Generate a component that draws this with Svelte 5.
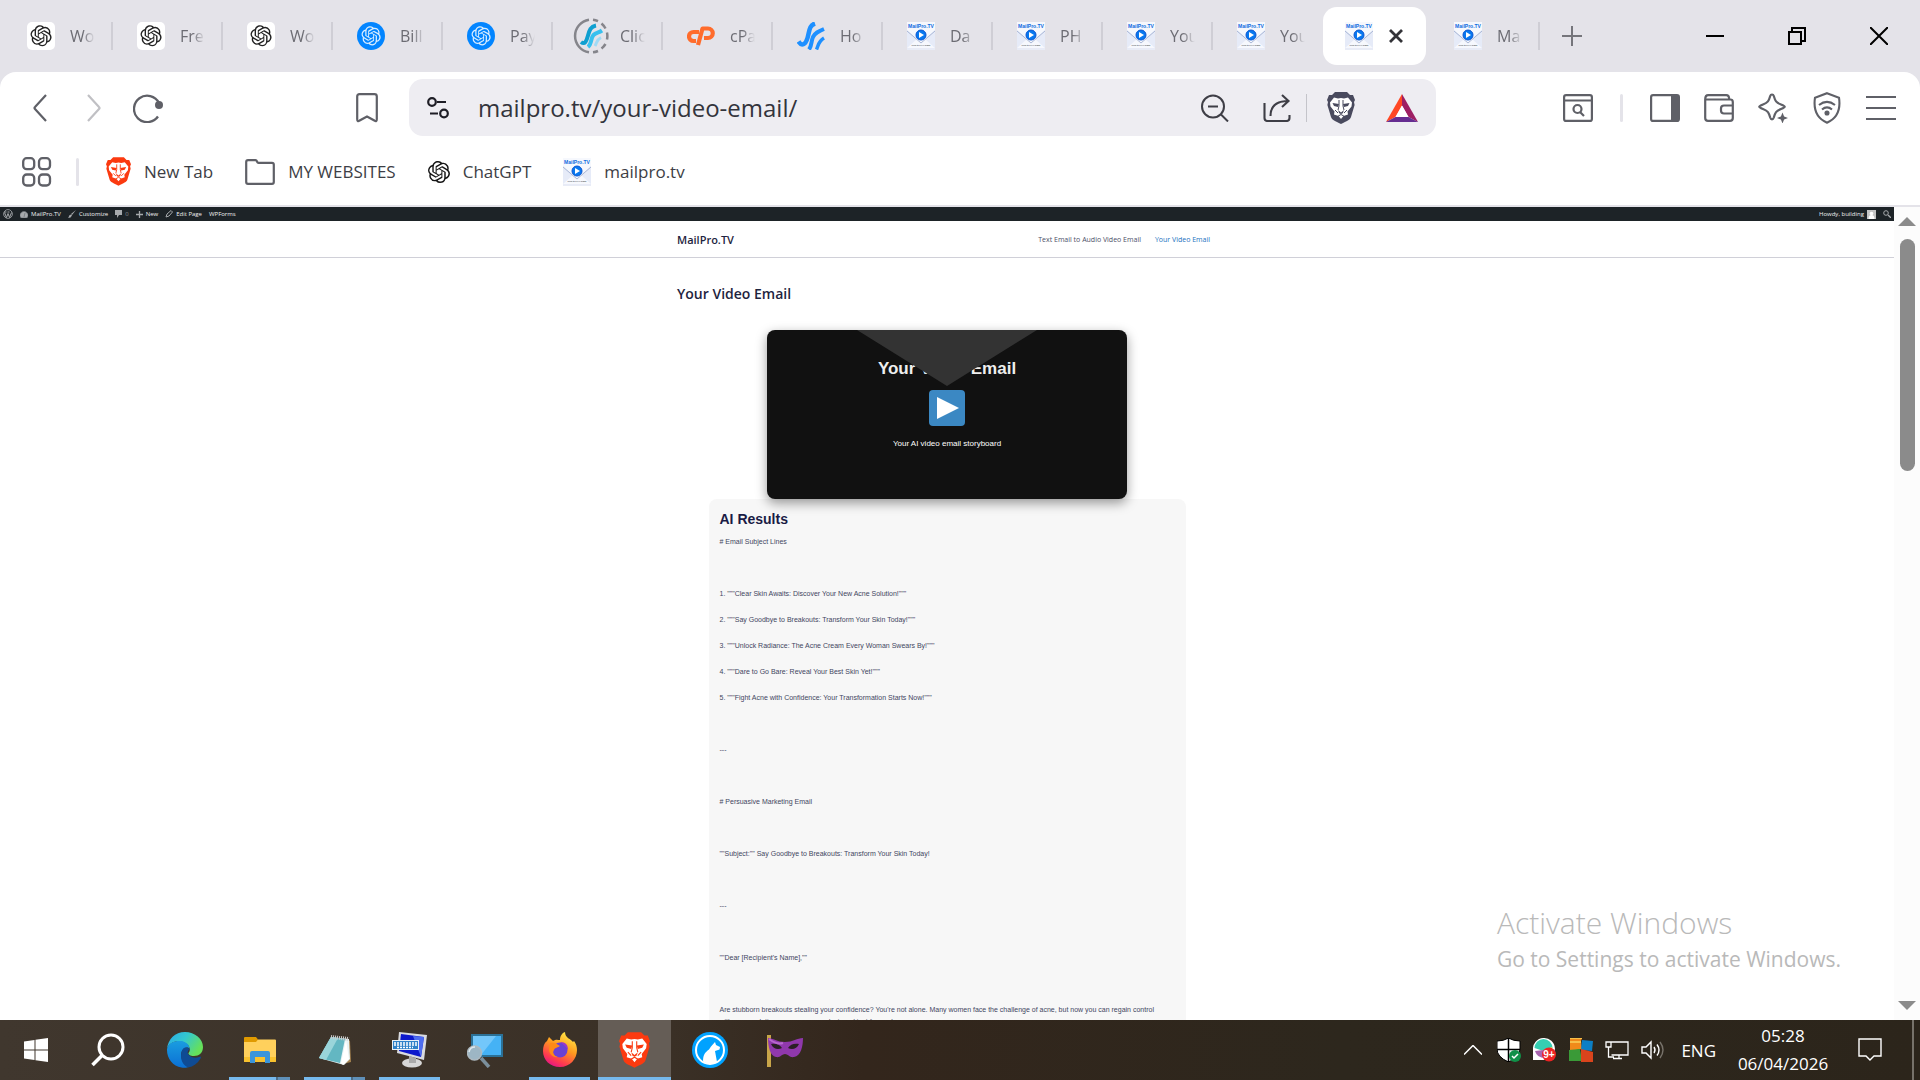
<script>
	let active = $state(12);
	let url = $state('mailpro.tv/your-video-email/');

	const tabs = [
		{ icon: 'gpt', title: 'Wo' },
		{ icon: 'gpt', title: 'Fre' },
		{ icon: 'gpt', title: 'Wo' },
		{ icon: 'gptblue', title: 'Bill' },
		{ icon: 'gptblue', title: 'Pay' },
		{ icon: 'loading', title: 'Clic' },
		{ icon: 'cpanel', title: 'cPa' },
		{ icon: 'host', title: 'Ho' },
		{ icon: 'mail', title: 'Da' },
		{ icon: 'mail', title: 'PH' },
		{ icon: 'mail', title: 'You' },
		{ icon: 'mail', title: 'You' },
		{ icon: 'mail', title: 'Your Video Email' },
		{ icon: 'mail', title: 'Ma' }
	];

	const results = [
		'# Email Subject Lines',
		'',
		'1. """Clear Skin Awaits: Discover Your New Acne Solution!"""',
		'2. """Say Goodbye to Breakouts: Transform Your Skin Today!"""',
		'3. """Unlock Radiance: The Acne Cream Every Woman Swears By!"""',
		'4. """Dare to Go Bare: Reveal Your Best Skin Yet!"""',
		'5. """Fight Acne with Confidence: Your Transformation Starts Now!"""',
		'',
		'---',
		'',
		'# Persuasive Marketing Email',
		'',
		'""Subject:"" Say Goodbye to Breakouts: Transform Your Skin Today!',
		'',
		'---',
		'',
		'""Dear [Recipient\'s Name],""',
		'',
		"Are stubborn breakouts stealing your confidence? You're not alone. Many women face the challenge of acne, but now you can regain control with our revolutionary acne cream designed just for you!"
	];

	const apps = [
		{ name: 'Edge' },
		{ name: 'File Explorer', open: true, multi: true },
		{ name: 'Notepad', open: true, multi: true },
		{ name: 'On-Screen Keyboard', open: true },
		{ name: 'Magnifier' },
		{ name: 'Firefox', open: true },
		{ name: 'Brave', open: true, current: true },
		{ name: 'LibreWolf' },
		{ name: 'Mask' }
	];
</script>

{#snippet knot()}
	<path d="M22.2819 9.8211a5.9847 5.9847 0 0 0-.5157-4.9108 6.0462 6.0462 0 0 0-6.5098-2.9A6.0651 6.0651 0 0 0 4.9807 4.1818a5.9847 5.9847 0 0 0-3.9977 2.9 6.0462 6.0462 0 0 0 .7427 7.0966 5.98 5.98 0 0 0 .511 4.9107 6.051 6.051 0 0 0 6.5146 2.9001A5.9847 5.9847 0 0 0 13.2599 24a6.0557 6.0557 0 0 0 5.7718-4.2058 5.9894 5.9894 0 0 0 3.9977-2.9001 6.0557 6.0557 0 0 0-.7475-7.0729zm-9.022 12.6081a4.4755 4.4755 0 0 1-2.8764-1.0408l.1419-.0804 4.7783-2.7582a.7948.7948 0 0 0 .3927-.6813v-6.7369l2.02 1.1686a.071.071 0 0 1 .038.052v5.5826a4.504 4.504 0 0 1-4.4945 4.4944zm-9.6607-4.1254a4.4708 4.4708 0 0 1-.5346-3.0137l.142.0852 4.783 2.7582a.7712.7712 0 0 0 .7806 0l5.8428-3.3685v2.3324a.0804.0804 0 0 1-.0332.0615L9.74 19.9502a4.4992 4.4992 0 0 1-6.1408-1.6464zM2.3408 7.8956a4.485 4.485 0 0 1 2.3655-1.9728V11.6a.7664.7664 0 0 0 .3879.6765l5.8144 3.3543-2.0201 1.1685a.0757.0757 0 0 1-.071 0l-4.8303-2.7865A4.504 4.504 0 0 1 2.3408 7.872zm16.5963 3.8558L13.1038 8.364 15.1192 7.2a.0757.0757 0 0 1 .071 0l4.8303 2.7913a4.4944 4.4944 0 0 1-.6765 8.1042v-5.6772a.79.79 0 0 0-.407-.667zm2.0107-3.0231l-.142-.0852-4.7735-2.7818a.7759.7759 0 0 0-.7854 0L9.409 9.2297V6.8974a.0662.0662 0 0 1 .0284-.0615l4.8303-2.7866a4.4992 4.4992 0 0 1 6.6802 4.66zM8.3065 12.863l-2.02-1.1638a.0804.0804 0 0 1-.038-.0567V6.0742a4.4992 4.4992 0 0 1 7.3757-3.4537l-.142.0805L8.704 5.459a.7948.7948 0 0 0-.3927.6813zm1.0976-2.3654l2.602-1.4998 2.6069 1.4998v2.9994l-2.5974 1.4997-2.6067-1.4997Z" />
{/snippet}

{#snippet mailIcon()}
	<svg width="28" height="28" viewBox="0 0 28 28">
		<rect width="28" height="28" fill="#f6f8fd" />
		<path d="M0 8l10 9L0 26zM28 8l-10 9 10 9z" fill="#e6ebf8" />
		<path d="M0 9l14 12L28 9" fill="none" stroke="#a9b6d6" />
		<text x="14" y="6" class="mail-name">MailPro.TV</text>
		<circle cx="14" cy="13" r="5" fill="#0878f0" stroke="#0a55d0" />
		<path d="M12 10l5 3-5 3z" fill="#fff" />
		<text x="14" y="24" class="mail-sub">Click to PLAY Email</text>
		<path d="M0 27h28" stroke="#dadff0" />
	</svg>
{/snippet}

{#snippet lion(color, width, height)}
	<svg {width} {height} viewBox="0 0 28 32">
		<path d="M8 0h12l3 3 3 0 2 5-1 2 .6 3-3.6 12c-1 3-4 4-10 7-6-3-9-4-10-7L.4 13 1 10 0 8l2-5 3 0z" fill={color} />
		<path d="M7 5.500l4 1 3-.5 3 .5 4-1 4 5-.5 4-4 5 .5 3-4.500 1.500L14 27l-2.500-3L7 22.500l.5-3-4-5-.5-4z" fill="#fff" />
		<path d="M5.500 11l6.500 1-1 3-4-1zM22.500 11L16 12l1 3 4-1zM11 18l3 2.500 3-2.500-1.200 3.200-1.800.8-1.800-.8z" fill={color} />
		<path d="M12 8v6l-1 4M16 8v6l1 4M8 18l3 3M20 18l-3 3M10.500 24.500L14 22.500l3.500 2" fill="none" stroke={color} stroke-width="1" />
	</svg>
{/snippet}

{#snippet favicon(name)}
	{#if name == 'gpt'}
		<svg width="28" height="28" viewBox="0 0 28 28">
			<rect width="28" height="28" rx="5" fill="#fff" />
			<g transform="translate(3.500 3.200) scale(.88)" fill="#222">{@render knot()}</g>
		</svg>
	{:else if name == 'gptblue'}
		<svg width="28" height="28" viewBox="0 0 28 28">
			<circle cx="14" cy="14" r="14" fill="#0285ff" />
			<g transform="translate(4.500 4.200) scale(.8)" fill="#d9edff">{@render knot()}</g>
		</svg>
	{:else if name == 'loading'}
		<svg width="36" height="36" viewBox="0 0 36 36" fill="none">
			<path d="M16 1.700a16.500 16.500 0 0 0 0 32.600" stroke="#85858b" stroke-width="2.500" />
			<path d="M20 1.700a16.500 16.500 0 0 1 5 1.500M28.500 5.500a16.500 16.500 0 0 1 4 5M34 14.500a16.500 16.500 0 0 1 0 7M32.500 26a16.500 16.500 0 0 1-4 4.500M25 33a16.500 16.500 0 0 1-5 1.300" stroke="#85858b" stroke-width="2.500" />
			<path d="M8 24c4 3 5.500-1 7-6.500C16.500 12 17.500 8.500 23 7.500" stroke="#0f9fd0" stroke-width="4" />
			<path d="M15 29c4-3 2.500-9 5.500-12 2.500-2.500 5-2 8.500-4.500" stroke="#38c0ee" stroke-width="4" />
			<path d="M22 28c2-3 1-6 6-8.500" stroke="#a0daf5" stroke-width="3" />
		</svg>
	{:else if name == 'cpanel'}
		<svg width="28" height="28" viewBox="0 0 28 28">
			<path d="M12 10H6.500a4.500 4.500 0 0 0 0 9H9M11 23l4.500-16.500H21a4.500 4.500 0 0 1 0 9.500h-4" fill="none" stroke="#ff6c2c" stroke-width="4.200" stroke-linejoin="round" />
		</svg>
	{:else if name == 'host'}
		<svg width="28" height="28" viewBox="0 0 28 28" fill="none" stroke="#1e90ff">
			<path d="M1.500 19.500c3 5 7 3.500 9-3.500C12.500 9 12 3.500 18 1.500" stroke-width="4.500" />
			<path d="M12 27.500c3-4 2-8 4-12.500 2-4 5-5.500 11-8" stroke-width="4" />
			<path d="M19.500 27.500c2-4 1.500-8 7.500-11.500" stroke-width="3.500" />
		</svg>
	{:else}
		{@render mailIcon()}
	{/if}
{/snippet}

<div class="desktop">
	<header class="browser">
		<div class="tabstrip">
			<div class="tabs" role="tablist">
				{#each tabs as tab, i}
					{#if i == active}
						<div class="tab current" role="tab" tabindex="0" aria-selected="true" aria-label={tab.title}>
							{@render favicon(tab.icon)}
							<button class="close" aria-label="Close tab">
								<svg width="14" height="14" viewBox="0 0 14 14"><path d="M1 1l12 12M13 1L1 13" stroke="#333338" stroke-width="2.800" /></svg>
							</button>
						</div>
					{:else}
						<button class="tab" class:nosep={i == active - 1} role="tab" aria-selected="false" onclick={() => (active = i)}>
							<span class="fav">{@render favicon(tab.icon)}</span>
							<span class="title">{tab.title}</span>
						</button>
					{/if}
				{/each}
			</div>
			<button class="newtab" aria-label="New tab">
				<svg width="20" height="20" viewBox="0 0 20 20"><path d="M10 0v20M0 10h20" stroke="#75757b" stroke-width="2" /></svg>
			</button>
			<div class="window-controls">
				<button aria-label="Minimize"><svg width="18" height="18"><path d="M0 9h18" stroke="#000" stroke-width="2" /></svg></button>
				<button aria-label="Restore"><svg width="18" height="18" fill="none" stroke="#000" stroke-width="2"><path d="M1 5h12v12H1zM4 4V1h13v13h-3" /></svg></button>
				<button aria-label="Close"><svg width="18" height="18"><path d="M0 0l18 18M18 0L0 18" stroke="#000" stroke-width="2" /></svg></button>
			</div>
		</div>

		<div class="chrome">
			<div class="toolbar">
				<div class="nav-buttons">
					<button aria-label="Back"><svg width="14" height="28" viewBox="0 0 14 28"><path d="M13 1L2 13q-1 1 0 2l11 12" fill="none" stroke="#5f6067" stroke-width="2.200" /></svg></button>
					<button aria-label="Forward"><svg width="14" height="28" viewBox="0 0 14 28"><path d="M1 1l11 12q1 1 0 2L1 27" fill="none" stroke="#c0c0c4" stroke-width="2.200" /></svg></button>
					<button aria-label="Reload"><svg width="30" height="30" viewBox="0 0 30 30"><path d="M26 10A13.200 13.200 0 1 0 25 23.500" fill="none" stroke="#5f6067" stroke-width="2.300" /><circle cx="26" cy="12" r="4" fill="#5f6067" /></svg></button>
				</div>
				<button class="bookmark" aria-label="Bookmark this page"><svg width="22" height="30" viewBox="0 0 22 30"><path d="M1.200 26V3.500Q1.200 1.200 3.500 1.200h15q2.300 0 2.300 2.300V26q0 3.500-2.500 1.500L11 23.500l-7.300 4q-2.500 2-2.500-1.500z" fill="none" stroke="#5f6067" stroke-width="2.200" /></svg></button>

				<div class="omnibox">
					<button aria-label="Site settings"><svg width="22" height="22" viewBox="0 0 22 22" fill="none" stroke="#1e1e26" stroke-width="2.200"><circle cx="5" cy="5" r="3.800" /><path d="M10 5h9M3 16.500h8" /><circle cx="17" cy="16.500" r="3.800" /></svg></button>
					<input type="text" aria-label="Address" bind:value={url} />
					<button aria-label="Zoom"><svg width="28" height="28" viewBox="0 0 28 28" fill="none" stroke="#3e3e46" stroke-width="2"><circle cx="12" cy="12.500" r="11" /><path d="M7 12.500h10M20 20.500l7 7" /></svg></button>
					<button class="share" aria-label="Share"><svg width="28" height="28" viewBox="0 0 28 28" fill="none" stroke="#3e3e46" stroke-width="2.100"><path d="M1.500 9v15q0 3 3 3h19q3 0 3-3v-3M7.500 22c0-9 5-15 18-15M19 1l6.500 6-6.500 6" /></svg></button>
					<span class="bar"></span>
					<button class="shields" aria-label="Brave Shields">{@render lion('#494a5e', 28, 34)}</button>
					<button aria-label="Rewards">
						<svg width="32" height="28" viewBox="0 0 32 28">
							<path d="M16 0L0 28l9.500-5L16 11.500z" fill="#ff4724" /><path d="M16 0l16 28-9.500-5L16 11.500z" fill="#9e1f63" /><path d="M0 28h32l-9.500-5h-13z" fill="#662d91" /><path d="M16 11.500L22.500 23h-13z" fill="#fff" />
						</svg>
					</button>
				</div>

				<div class="actions">
					<button aria-label="Search tabs"><svg width="30" height="28" viewBox="0 0 30 28" fill="none" stroke="#5f6067" stroke-width="2.200"><rect x="1.100" y="1.100" width="27.800" height="25.800" rx="2" /><path d="M1 6.500h28M17 18l4 4" /><circle cx="14.500" cy="15" r="4" /></svg></button>
					<span class="split"></span>
					<button aria-label="Sidebar"><svg width="30" height="28" viewBox="0 0 30 28"><rect x="1.100" y="1.100" width="27.800" height="25.800" rx="2" fill="none" stroke="#5f6067" stroke-width="2.200" /><path d="M21 1h8v26h-8z" fill="#5f6067" /></svg></button>
					<button aria-label="Wallet"><svg width="30" height="28" viewBox="0 0 30 28" fill="none" stroke="#5f6067" stroke-width="2.200"><path d="M1.200 6V24q0 2.800 2.800 2.800h22q2.800 0 2.800-2.800V8q0-2.500-2.500-2.500H1.200q0-4.300 3-4.300h18q3 0 3 4.300M28.800 11.500H20q-3 0-3 3v2q0 3 3 3h8.800" /></svg></button>
					<button aria-label="Leo AI"><svg width="30" height="30" viewBox="0 0 30 30"><path d="M14 1.500c1 0 1.500.5 1.800 1.500 1.400 5 2.200 6.500 7.200 8.500 5 2 5 2.500 0 4.500-5 2-5.800 3.500-7.200 8.500-.8 2.500-2.800 2.500-3.600 0C10.800 19.500 10 18 5 16c-5-2-5-2.500 0-4.500 5-2 5.800-3.500 7.200-8.500.3-1 .8-1.500 1.800-1.500z" fill="none" stroke="#5f6067" stroke-width="2.200" /><path d="M24.500 19.500l1.600 4 3.900 1.500-3.900 1.500-1.600 4-1.600-4L19 25l3.900-1.500z" fill="#5f6067" /></svg></button>
					<button aria-label="VPN"><svg width="30" height="32" viewBox="-1 0 30 32" fill="none" stroke="#5f6067" stroke-width="2.100"><path d="M14 1.200l12 4.500c1.500 10-.5 20-12 25C2.500 25.700.5 15.700 2 5.700z" /><path d="M6 13c5-4 11-4 16 0M9 17.500c3-2.500 7-2.500 10 0" /><circle cx="14" cy="21" r="1.500" fill="#5f6067" /></svg></button>
					<button aria-label="Menu"><svg width="30" height="26" viewBox="0 0 30 26"><path d="M0 2h30M0 13h30M0 24h30" stroke="#5f6067" stroke-width="2.200" /></svg></button>
				</div>
			</div>

			<nav class="bookmarks">
				<button aria-label="All bookmarks"><svg width="30" height="30" viewBox="0 0 30 30" fill="none" stroke="#5f6067" stroke-width="2.300"><rect x="1.200" y="1.200" width="11" height="11" rx="3.500" /><rect x="17" y="1.200" width="11" height="11" rx="3.500" /><rect x="1.200" y="17.500" width="11" height="11" rx="3.500" /><rect x="17" y="17.500" width="11" height="11" rx="3.500" /></svg></button>
				<span class="split"></span>
				<a href="#newtab">{@render lion('#fb3a10', 25, 29)}New Tab</a>
				<a href="#websites"><svg width="30" height="26" viewBox="0 0 30 26"><path d="M1.200 3q0-1.800 1.800-1.800h7.500q1 0 1.500 1.300t1.500 1.300H27q1.800 0 1.800 1.800V23q0 1.800-1.800 1.800H3Q1.200 24.800 1.200 23z" fill="none" stroke="#5f6067" stroke-width="2.200" /></svg>MY WEBSITES</a>
				<a href="#chatgpt"><svg width="22" height="22" viewBox="0 0 24 24" fill="#151515">{@render knot()}</svg>ChatGPT</a>
				<a href="#mailpro">{@render mailIcon()}mailpro.tv</a>
			</nav>
		</div>
	</header>

	<div class="viewport">
		<main class="page">
			<div class="adminbar">
				<a href="#wp" aria-label="WordPress"><svg width="10" height="10" viewBox="0 0 10 10"><circle cx="5" cy="5" r="4.400" fill="none" stroke="#a7aaad" stroke-width=".8" /><path d="M1.500 3.500l2 5L5 4.500l1.500 4 2-5M1.500 3h2M4.500 3h2" fill="none" stroke="#a7aaad" /></svg></a>
				<a href="#site"><svg width="8" height="7" viewBox="0 0 8 7"><path d="M1 7a4 4 0 1 1 6 0zM4 6l1-4" fill="#a7aaad" stroke="#555a60" stroke-width=".5" /></svg>MailPro.TV</a>
				<a href="#customize"><svg width="8" height="8" viewBox="0 0 8 8"><path d="M8 0L3 4l1 1zM3 4.500L4 5.500Q3 8 0 8q1-1 1-2t2-1.500z" fill="#a7aaad" /></svg>Customize</a>
				<a href="#comments" class="dim"><svg width="7" height="8" viewBox="0 0 7 8"><path d="M0 0h7v5H4L2 8V5H0z" fill="#a7aaad" /></svg>0</a>
				<a href="#new"><svg width="7" height="7" viewBox="0 0 7 7"><path d="M3.500 0v7M0 3.500h7" stroke="#a7aaad" stroke-width="1.300" /></svg>New</a>
				<a href="#edit"><svg width="8" height="8" viewBox="0 0 8 8"><path d="M1 7l1-3 4-3.500L7.500 2 4 6z" fill="none" stroke="#a7aaad" /></svg>Edit Page</a>
				<a href="#wpforms">WPForms</a>
				<a href="#profile" class="howdy">Howdy, building<svg width="9" height="9" viewBox="0 0 9 9"><path d="M0 0h9v9H0z" fill="#c4c4c4" /><circle cx="4.500" cy="3.500" r="1.800" fill="#fff" /><path d="M1.500 9q0-4 3-4t3 4z" fill="#fff" /></svg></a>
				<a href="#search" aria-label="Search"><svg width="8" height="8" viewBox="0 0 8 8"><circle cx="3" cy="3" r="2.300" fill="none" stroke="#a7aaad" /><path d="M5 5l3 3" stroke="#a7aaad" stroke-width="1.300" /></svg></a>
			</div>

			<div class="site-header">
				<div class="container">
					<a href="#home" class="brand">MailPro.TV</a>
					<nav>
						<a href="#text-email">Text Email to Audio Video Email</a>
						<a href="#your-video" class="here">Your Video Email</a>
					</nav>
				</div>
			</div>

			<div class="container column">
				<h1>Your Video Email</h1>
			</div>

			<section class="video">
				<h2>Your Video Email</h2>
				<button aria-label="Play">
					<svg width="36" height="36" viewBox="0 0 36 36"><rect width="36" height="36" rx="4" fill="#3b88c3" /><path d="M8 7l22 11L8 29z" fill="#fff" /></svg>
				</button>
				<p>Your AI video email storyboard</p>
				<div class="flap"></div>
			</section>

			<section class="results">
				<h3>AI Results</h3>
				{#each results as line}
					<p>{line}</p>
				{/each}
			</section>
		</main>
		<div class="scrollbar">
			<svg width="18" height="9"><path d="M9 0l9 9H0z" fill="#8b8b8b" /></svg>
			<div class="track"><div class="thumb"></div></div>
			<svg width="18" height="9"><path d="M0 0h18L9 9z" fill="#8b8b8b" /></svg>
		</div>
		<div class="watermark">
			<strong>Activate Windows</strong>
			<span>Go to Settings to activate Windows.</span>
		</div>
	</div>

	<footer class="taskbar">
		<button class="start" aria-label="Start"><svg width="24" height="24" viewBox="0 0 24 24"><path d="M0 3.500L10.500 2v9.500H0zM11.500 1.800L24 0v11.500H11.500zM0 12.500h10.500V22L0 20.500zM11.500 12.500H24V24l-12.500-1.800z" fill="#fff" /></svg></button>
		<button class="find" aria-label="Search"><svg width="34" height="34" viewBox="0 0 34 34" fill="none" stroke="#fff" stroke-width="3"><circle cx="20" cy="14" r="12" /><path d="M11 22.500L1.500 32" stroke-width="3.500" /></svg></button>
		{#each apps as app}
			<button class="app" class:open={app.open} class:multi={app.multi} class:active={app.current} aria-label={app.name}>
				{#if app.name == 'Edge'}
					<svg width="36" height="36" viewBox="0 0 36 36">
						<defs>
							<linearGradient id="edgeA" x1="0" x2="1" y1="0" y2=".5"><stop offset="0" stop-color="#2aa8e8" /><stop offset=".5" stop-color="#33c8d0" /><stop offset="1" stop-color="#66e05a" /></linearGradient>
							<linearGradient id="edgeB" x1="0" x2="0" y1="0" y2="1"><stop offset="0" stop-color="#1a9de0" /><stop offset="1" stop-color="#0b6fd4" /></linearGradient>
						</defs>
						<path d="M0 17C1 7 8 0 18 0s18 7 18 15c0 6-4 9-9 9-4 0-6-1.500-5.500-3 3-3 1-9-5.500-11C10 8 2 10 0 17z" fill="url(#edgeA)" />
						<path d="M0 17C2 10 8 8.500 14 9c5 .5 9 4 8.500 8 0-2-6-3-8 3-2 7 3 12 7 15-3 1-5 1-7 .6C6 34 0 27 0 18z" fill="url(#edgeB)" />
						<path d="M14.500 20c1-4 4-6 8-3-2 2-2.500 4-1 5.500 3 3.500 8 4 12 2 .5.500.5 1.500 0 2-3 5-7 8-12.500 9-6-3-8-9-6.500-15.500z" fill="#0f4b94" />
					</svg>
				{:else if app.name == 'File Explorer'}
					<svg width="32" height="26" viewBox="0 0 32 26">
						<path d="M0 1q0-1 1-1h11l2 2.500V5H0z" fill="#e09a00" /><path d="M0 5h12l2-2.500h17q1 0 1 1V24q0 1-1 1H1q-1 0-1-1z" fill="#ffd05c" /><path d="M0 20h32v4q0 1-1 1H1q-1 0-1-1z" fill="#f9c22e" />
						<path d="M6 26V16q0-2 2-2h16q2 0 2 2v10h-5v-6H11v6z" fill="#3a95dc" />
					</svg>
				{:else if app.name == 'Notepad'}
					<svg width="32" height="32" viewBox="0 0 32 32">
						<path d="M26 4l5 3 1 21-8 2z" fill="#a58350" /><path d="M12 3l18 2 1 20-6 6L0 24z" fill="#e8f3f5" /><path d="M12 3l14 2-5 24L0 24z" fill="#63b7c2" /><path d="M12 3l7 1L7 26l-7-2z" fill="#9ad5da" /><path d="M22 29l5-23 3 19-6 6z" fill="#fff" /><path d="M12 3l18 2" stroke="#ccc" stroke-width="4" stroke-dasharray="1 1" />
					</svg>
				{:else if app.name == 'On-Screen Keyboard'}
					<svg width="36" height="36" viewBox="0 0 36 36">
						<ellipse cx="20" cy="31" rx="10" ry="4.500" fill="#d7d7d7" /><path d="M17 24l7 2v5h-7z" fill="#aaa" /><path d="M7 0l28 3-3 25L5 21z" fill="#d9dbe0" /><path d="M9 2l23 3-3 20L7 19z" fill="#0d18cc" /><path d="M21 4l11 1-3 20z" fill="#4d6df0" />
						<rect y="8" width="27" height="10" fill="#e8f1f8" /><rect x="1" y="9" width="25" height="8" fill="#2f82c9" /><path d="M2 11h23M2 13h23M5 15.500h16" stroke="#fff" stroke-width="1.300" stroke-dasharray="2 1" />
					</svg>
				{:else if app.name == 'Magnifier'}
					<svg width="36" height="36" viewBox="0 0 36 36">
						<path d="M4 2h32v23H4z" fill="#2b7197" /><path d="M6 4h28v19H6z" fill="#45b2f5" /><path d="M6 4h23L14 23H6z" fill="#73c7fa" /><path d="M14 26l8 9" stroke="#7b8f9c" stroke-width="3.500" /><circle cx="7.500" cy="21" r="7" fill="#9db6c4" stroke="#adb9c0" stroke-width="1.500" /><path d="M2 20q1-5 6-5" stroke="#e0e8ec" fill="none" stroke-width="1.500" />
					</svg>
				{:else if app.name == 'Firefox'}
					<svg width="34" height="36" viewBox="0 0 34 36">
						<defs><linearGradient id="fox" x1=".8" x2=".3" y1="0" y2="1"><stop offset="0" stop-color="#fff04a" /><stop offset=".45" stop-color="#ff9a1f" /><stop offset=".8" stop-color="#ff3b4e" /><stop offset="1" stop-color="#e31587" /></linearGradient></defs>
						<path d="M4 9l2-4 4 4c3-2 5-1 7-1 0-4 2-7 5-8 0 6 6 7 8 10l1-1c3 4 3 8 3 9 0 9-7 17-17 17S0 28 0 19c0-4 1-8 4-10z" fill="url(#fox)" />
						<circle cx="17" cy="18" r="7.500" fill="#6b41d4" /><path d="M7 11c4-1 6 0 10 3-2 2-5 1-6 4-2 3 0 6 4 7-5 1-9-3-9-8z" fill="#ff8a16" /><path d="M17 10c6 0 8 3 8 8l-3-4z" fill="#9b38c8" />
					</svg>
				{:else if app.name == 'Brave'}
					{@render lion('#fb3a10', 31, 36)}
				{:else if app.name == 'LibreWolf'}
					<svg width="36" height="36" viewBox="0 0 36 36">
						<circle cx="18" cy="18" r="18" fill="#00a2ff" /><circle cx="18" cy="18" r="14" fill="none" stroke="#fff" stroke-width="2" /><path d="M11 29.500c0-7 2-9 6-12l2-3 4-4.500 1 3 4 2-.5 2.500-4.500 1.500 2 11c-5 3-10 2-14-.5z" fill="#fff" />
					</svg>
				{:else}
					<svg width="36" height="34" viewBox="0 0 36 34">
						<path d="M0 2h4v32H0z" fill="#c8a549" /><path d="M1 5c5 0 9 4 17 4s12-4 18-4c0 8-2 18-9 19-4 1-6-3-9-3s-5 4-9 3C3 23 1 13 1 5z" fill="#9038ac" /><path d="M4 11c4-1 9 0 11 4-4 2-9 1-11-4zM32 11c-4-1-9 0-11 4 4 2 9 1 11-4z" fill="#2a1f25" /><path d="M2 6q8 6 14 4" stroke="#b768cf" fill="none" stroke-width="2" />
					</svg>
				{/if}
			</button>
		{/each}

		<div class="tray">
			<button aria-label="Show hidden icons"><svg width="18" height="10"><path d="M0 9.500l9-9 9 9" fill="none" stroke="#fff" stroke-width="1.500" /></svg></button>
			<button aria-label="Security"><svg width="24" height="24" viewBox="0 0 24 24"><path d="M11.500 0Q16 3 23 3v8q0 8-11.500 13Q0 19 0 11V3q7 0 11.500-3z" fill="#fff" stroke="#000" /><path d="M11.500 0v24M0 11.500h23" stroke="#000" stroke-width="1.500" /><circle cx="18" cy="18" r="6" fill="#109048" /><path d="M15 18l2 2 4-4" stroke="#fff" fill="none" stroke-width="1.500" /></svg></button>
			<button aria-label="Chat"><svg width="24" height="24" viewBox="0 0 24 24"><path d="M0 22V12a11 11 0 1 1 11 10z" fill="#fff" /><path d="M1.500 10a9 9 0 0 1 18 0l-9 3z" fill="#35cfb2" /><path d="M2 13l8-1 2 8q-8 0-10-7z" fill="#a864ae" /><path d="M11 12l8-3 1 5z" fill="#f5d24c" /><circle cx="16" cy="16.500" r="7" fill="#ee2424" /><text x="16" y="20" class="count">9+</text></svg></button>
			<button aria-label="Antivirus"><svg width="24" height="24" viewBox="0 0 24 24"><path d="M1 0h12l-1 3 1 8-12 2z" fill="#f08a1a" /><path d="M13 2l11 1-1 10-11-1z" fill="#0c7fc4" /><path d="M0 12l11-1 2 12H0z" fill="#3a9a37" /><path d="M12 11l12 3v10H12z" fill="#d9441c" /><path d="M1 0h12M1 4h11" stroke="#f7c04a" stroke-width="2" /></svg></button>
			<button aria-label="Network"><svg width="24" height="20" viewBox="0 0 24 20" fill="none" stroke="#fff" stroke-width="1.300"><path d="M6.500 2H23v13H6.500M14 15v3M8 18.500h9M1 2h5v5H1zM3.500 7v10H9" /></svg></button>
			<button aria-label="Volume"><svg width="24" height="20" viewBox="0 0 24 20" fill="none" stroke="#fff" stroke-width="1.400"><path d="M1 7h4l5-5v16l-5-5H1zM13 7q2 3 0 6M16 4.500q4 5.500 0 11" /><path d="M19 2q6 8 0 16" stroke="#77726a" /></svg></button>
			<button class="lang">ENG</button>
			<button class="clock"><span>05:28</span><span>06/04/2026</span></button>
			<button class="notify" aria-label="Notifications"><svg width="24" height="24" viewBox="0 0 24 24"><path d="M1 1h22v17h-7l-4 4-4-4H1z" fill="none" stroke="#fff" stroke-width="1.400" /></svg></button>
			<span class="show-desktop"></span>
		</div>
	</footer>
</div>

<style>
	:global(body) {
		margin: 0;
		overflow: hidden;
	}
	.desktop {
		height: 100vh;
		display: flex;
		flex-direction: column;
		font-family: "Open Sans", "Noto Sans", sans-serif;
		background: #fff;
	}
	button {
		border: 0;
		padding: 0;
		background: none;
		font: inherit;
		color: inherit;
		display: flex;
		align-items: center;
		justify-content: center;
	}
	a {
		color: inherit;
		text-decoration: none;
	}
	h1, h2, h3, p {
		margin: 0;
	}
	svg {
		display: block;
		flex-shrink: 0;
	}
	.browser {
		background: #e4e3e9;
	}
	.tabstrip {
		height: 72px;
		display: flex;
		align-items: center;
	}
	.tabs {
		display: flex;
		align-items: center;
		padding-left: 3px;
	}
	.tab {
		box-sizing: border-box;
		width: 110px;
		height: 28px;
		padding-left: 24px;
		justify-content: flex-start;
		gap: 15px;
		border-right: 2px solid #cfced5;
		font-size: 16px;
		color: #6c6c73;
	}
	.tab.nosep {
		border-color: transparent;
	}
	.tab.current {
		display: flex;
		align-items: center;
		width: 103px;
		height: 58px;
		margin-right: 4px;
		padding-left: 22px;
		gap: 16px;
		border: 0;
		border-radius: 14px;
		background: #fff;
	}
	.fav {
		width: 28px;
		display: flex;
		justify-content: center;
	}
	.title {
		width: 25px;
		overflow: hidden;
		white-space: nowrap;
		text-align: left;
		mask-image: linear-gradient(to right, #000 50%, transparent);
	}
	.mail-name, .mail-sub, .count {
		font-family: "Liberation Sans", sans-serif;
		font-weight: bold;
		font-size: 5px;
		text-anchor: middle;
		fill: #0b6ae0;
	}
	.mail-sub {
		font-size: 2px;
		fill: #55585f;
	}
	.count {
		font-size: 10px;
		fill: #fff;
	}
	.newtab {
		width: 64px;
		height: 40px;
	}
	.window-controls {
		margin-left: auto;
		display: flex;
	}
	.window-controls button {
		width: 82px;
		height: 72px;
	}
	.chrome {
		background: #fff;
		border-radius: 16px 16px 0 0;
		border-bottom: 2px solid #e4e3e9;
		padding-bottom: 5px;
	}
	.toolbar {
		height: 71px;
		display: flex;
		align-items: center;
		padding: 0 24px 0 33px;
	}
	.nav-buttons {
		display: flex;
		align-items: center;
		gap: 40px;
	}
	.nav-buttons button:last-child {
		margin-left: -8px;
	}
	.bookmark {
		margin: 0 31px 0 auto;
	}
	.omnibox {
		box-sizing: border-box;
		width: 1027px;
		height: 57px;
		display: flex;
		align-items: center;
		padding: 0 18px;
		border-radius: 14px;
		background: #eeedf2;
	}
	.omnibox input {
		flex: 1;
		min-width: 0;
		margin-left: 29px;
		padding: 0;
		border: 0;
		outline: 0;
		background: none;
		font: inherit;
		font-size: 24px;
		color: #33343c;
	}
	.share {
		margin: 0 15px 0 34px;
	}
	.bar {
		width: 1px;
		height: 28px;
		background: #c4c4ca;
	}
	.shields {
		margin: 0 31px 0 20px;
	}
	.actions {
		display: flex;
		align-items: center;
		gap: 24px;
		margin-left: 127px;
	}
	.split {
		width: 3px;
		height: 28px;
		border-radius: 2px;
		background: #e4e3e9;
	}
	.actions .split {
		margin: 0 3px;
	}
	.bookmarks {
		height: 57px;
		display: flex;
		align-items: center;
		padding-left: 22px;
		font-size: 17px;
		color: #3d3e45;
	}
	.bookmarks .split {
		margin: 0 27px 0 24px;
	}
	.bookmarks a {
		display: flex;
		align-items: center;
		gap: 13px;
		margin-right: 32px;
	}
	.viewport {
		flex: 1;
		min-height: 0;
		display: flex;
		position: relative;
	}
	.page {
		flex: 1;
		overflow: hidden;
	}
	.adminbar {
		box-sizing: border-box;
		height: 14px;
		display: flex;
		align-items: center;
		gap: 7px;
		padding: 0 3px;
		background: #1d2327;
		color: #f0f0f1;
		font-size: 6px;
	}
	.adminbar a {
		display: flex;
		align-items: center;
		gap: 3px;
	}
	.adminbar .dim {
		color: #8c9094;
	}
	.adminbar .howdy {
		margin-left: auto;
	}
	.site-header {
		border-bottom: 1px solid #d0d0d8;
	}
	.container {
		box-sizing: border-box;
		max-width: 540px;
		margin: 0 auto;
	}
	.site-header .container {
		height: 36px;
		display: flex;
		align-items: center;
		justify-content: space-between;
		padding-right: 7px;
	}
	.brand {
		font-size: 11px;
		font-weight: 600;
		color: #1e2440;
	}
	.site-header nav {
		display: flex;
		gap: 14px;
		font-size: 7px;
		color: #4b4f68;
	}
	.site-header .here {
		color: #1b72c0;
	}
	.column {
		padding: 27px 0;
	}
	h1 {
		font-size: 14px;
		line-height: 18px;
		font-weight: 600;
		color: #1e2440;
	}
	.video {
		position: relative;
		box-sizing: border-box;
		width: 360px;
		height: 169px;
		margin: 0 auto;
		padding-top: 29px;
		display: flex;
		flex-direction: column;
		align-items: center;
		border-radius: 8px;
		background: #111;
		box-shadow: 0 4px 12px rgba(0, 0, 0, 0.4);
		font-family: "Liberation Sans", sans-serif;
		color: #eee;
	}
	.video h2 {
		font-size: 17px;
		line-height: 20px;
		margin-bottom: 11px;
	}
	.video p {
		margin-top: 13px;
		font-size: 8px;
		line-height: 10px;
		color: #fff;
	}
	.flap {
		position: absolute;
		top: 0;
		left: 90px;
		width: 180px;
		height: 56px;
		background: #333;
		clip-path: polygon(0 0, 100% 0, 50% 100%);
	}
	.results {
		box-sizing: border-box;
		max-width: 477px;
		margin: 0 auto;
		padding: 11px 20px 11px 11px;
		border-radius: 8px;
		background: #f7f7f7;
		font-family: "Liberation Sans", sans-serif;
		color: #42465f;
	}
	.results h3 {
		margin-bottom: 8px;
		font-size: 14px;
		line-height: 18px;
		color: #1a1b45;
	}
	.results p {
		min-height: 12px;
		margin-bottom: 14px;
		font-size: 7px;
		line-height: 12px;
	}
	.scrollbar {
		width: 26px;
		display: flex;
		flex-direction: column;
		align-items: center;
		box-sizing: border-box;
		padding: 10px 0;
		background: #fcfcfc;
	}
	.track {
		flex: 1;
		width: 15px;
		padding: 13px 0;
	}
	.thumb {
		height: 31%;
		border-radius: 8px;
		background: #8b8b8b;
	}
	.watermark {
		position: absolute;
		right: 79px;
		bottom: 46px;
		display: flex;
		flex-direction: column;
		color: #b9b9b9;
		font-size: 21px;
		line-height: 30px;
	}
	.watermark strong {
		font-size: 30px;
		line-height: 42px;
		font-weight: 300;
	}
	.taskbar {
		height: 60px;
		display: flex;
		background: linear-gradient(to right, #40372e, #3a3026 35%, #33261c 45%, #2d271d 70%, #2c251b);
		color: #fff;
	}
	.start {
		width: 72px;
	}
	.find {
		width: 75px;
		padding-right: 4px;
	}
	.app {
		box-sizing: border-box;
		width: 75px;
		border-top: 3px solid transparent;
		border-bottom: 3px solid transparent;
	}
	.app.open {
		width: 61px;
		margin: 0 7px;
		border-bottom-color: #76b9ed;
	}
	.app.multi {
		border-image: linear-gradient(to right, #76b9ed 47px, #4c6c86 47px, #4c6c86 49px, #5f90b8 49px) 0 0 3 0;
	}
	.app.active {
		width: 73px;
		margin: 0 1px;
		background: #655d56;
	}
	.tray {
		margin-left: auto;
		display: flex;
		align-items: center;
		gap: 12px;
		font-size: 17px;
	}
	.tray button {
		min-width: 24px;
	}
	.lang {
		margin-left: 4px;
	}
	.clock {
		flex-direction: column;
		width: 100px;
		line-height: 28px;
		margin-left: 5px;
	}
	.notify {
		margin: 0 18px 0 13px;
	}
	.show-desktop {
		box-sizing: border-box;
		width: 8px;
		align-self: stretch;
		border-left: 2px solid #77726a;
	}
</style>
